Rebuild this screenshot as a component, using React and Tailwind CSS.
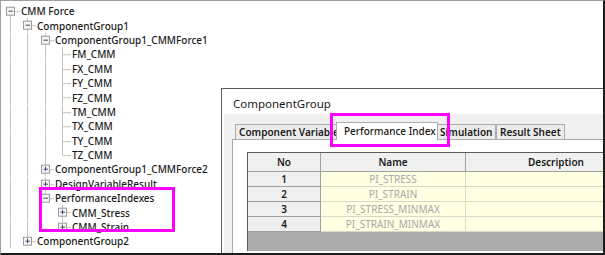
import React from "react";

const ROW_H = 14.4;
const CX = [9, 26, 44, 61];
const TX = [20, 36, 54, 71];

const nodes = [
  { t: "CMM Force", l: 0, box: "-" },
  { t: "ComponentGroup1", l: 1, box: "-" },
  { t: "ComponentGroup1_CMMForce1", l: 2, box: "-" },
  { t: "FM_CMM", l: 3 },
  { t: "FX_CMM", l: 3 },
  { t: "FY_CMM", l: 3 },
  { t: "FZ_CMM", l: 3 },
  { t: "TM_CMM", l: 3 },
  { t: "TX_CMM", l: 3 },
  { t: "TY_CMM", l: 3 },
  { t: "TZ_CMM", l: 3 },
  { t: "ComponentGroup1_CMMForce2", l: 2, box: "+" },
  { t: "DesignVariableResult", l: 2, box: "+" },
  { t: "PerformanceIndexes", l: 2, box: "-" },
  { t: "CMM_Stress", l: 3, box: "+" },
  { t: "CMM_Strain", l: 3, box: "+" },
  { t: "ComponentGroup2", l: 1, box: "+" },
];

// does the node at index i have a later sibling?
function hasNext(i) {
  if (nodes[i].l === 0) return true;
  for (let j = i + 1; j < nodes.length; j++) {
    if (nodes[j].l < nodes[i].l) return false;
    if (nodes[j].l === nodes[i].l) return true;
  }
  return false;
}

function ancestorHasNext(i, level) {
  for (let j = i - 1; j >= 0; j--) {
    if (nodes[j].l === level) return hasNext(j);
  }
  return true;
}

const LINE = "#c3c3c3";

function TreeRow({ node, i }) {
  const { l, box, t } = node;
  const cx = CX[l] + 0.5;
  const mid = ROW_H / 2;
  const w = TX[l];
  return (
    <div className="flex items-center" style={{ height: ROW_H }}>
      <svg width={w} height={ROW_H} className="shrink-0 block">
        {CX.slice(0, l).map((x, k) =>
          ancestorHasNext(i, k) ? (
            <line key={k} x1={x + 0.5} y1={0} x2={x + 0.5} y2={ROW_H} stroke={LINE} strokeWidth="1" />
          ) : null
        )}
        {l > 0 && <line x1={cx} y1={0} x2={cx} y2={mid} stroke={LINE} strokeWidth="1" />}
        {hasNext(i) && <line x1={cx} y1={mid} x2={cx} y2={ROW_H} stroke={LINE} strokeWidth="1" />}
        <line x1={box ? cx + 4 : cx} y1={mid + 0.5} x2={w - 1} y2={mid + 0.5} stroke={LINE} strokeWidth="1" />
        {box && (
          <g>
            <rect x={cx - 4} y={mid - 4} width="8" height="8" fill="#f4f4f4" stroke="#9a9a9a" strokeWidth="1" />
            <line x1={cx - 2} y1={mid} x2={cx + 2.5} y2={mid} stroke="#3f4f6f" strokeWidth="1" />
            {box === "+" && <line x1={cx} y1={mid - 2.5} x2={cx} y2={mid + 2} stroke="#3f4f6f" strokeWidth="1" />}
          </g>
        )}
      </svg>
      <span className="whitespace-nowrap text-[10px] font-medium leading-none text-[#1a1a1a]">{t}</span>
    </div>
  );
}

const rows = [
  ["1", "PI_STRESS"],
  ["2", "PI_STRAIN"],
  ["3", "PI_STRESS_MINMAX"],
  ["4", "PI_STRAIN_MINMAX"],
];

function Tab({ label, width, active }) {
  return active ? (
    <div
      className="relative z-10 -mx-[2px] h-[18px] -mb-px border border-b-0 border-[#acacac] bg-white pl-[7px] pt-[1px] text-[10px] font-medium leading-[14px] text-[#1a1a1a] whitespace-nowrap"
      style={{ width }}
    >
      {label}
    </div>
  ) : (
    <div
      className="h-[15px] overflow-hidden border border-b-0 border-[#acacac] bg-[#ececec] pl-[3px] pt-[1px] text-[10px] font-semibold leading-[13px] text-[#1a1a1a] whitespace-nowrap"
      style={{ width }}
    >
      {label}
    </div>
  );
}

export default function App() {
  return (
    <div
      className="relative w-[605px] h-[255px] overflow-hidden bg-white border-t border-l border-[#a0a0a0] border-r-2 border-r-[#1c1c1c] border-b-2 border-b-[#1c1c1c]"
      style={{ fontFamily: '"Noto Sans", "Open Sans", sans-serif' }}
    >
      <div className="pt-[3px]">
        {nodes.map((n, i) => (
          <TreeRow key={i} node={n} i={i} />
        ))}
      </div>

      {/* dialog window */}
      <div className="absolute left-[220px] top-[87px] w-[400px] h-[190px] border border-[#5c5c5c] bg-white flex flex-col">
        <div className="h-[25px] pl-[11px] pt-[7px] text-[11.5px] leading-[16px] text-[#1a1a1a]">ComponentGroup</div>
        <div className="flex-1 ml-[2px] bg-[#f0f0f0] pl-[8px] pt-[9px]">
          <div className="flex items-end pl-[3px] h-[16px]">
            <Tab label="Component Variable" width={103} />
            <Tab label="Performance Index" width={102} active />
            <Tab label="Simulation" width={60} />
            <Tab label="Result Sheet" width={69} />
          </div>
          <div className="h-[130px] border border-[#acacac] bg-white pl-[14px] pt-[12px]">
            <div className="border-l border-t border-[#5c5c5c] bg-[#ababab] h-[99px] text-[10px]">
              <div className="flex h-[19px] bg-[#f0f0f0] font-semibold text-[#1a1a1a]">
                <div className="w-[73px] flex items-center justify-center border-r border-b border-[#a0a0a0]">No</div>
                <div className="w-[145px] flex items-center justify-center border-r border-b border-[#a0a0a0]">Name</div>
                <div className="flex-1 flex items-center border-b border-[#a0a0a0] pl-[62px]">Description</div>
              </div>
              {rows.map(([no, name]) => (
                <div key={no} className="flex h-[15px]">
                  <div className="w-[73px] flex items-center justify-center border-r border-b border-[#a0a0a0] bg-[#f0f0f0] font-semibold text-[#1a1a1a]">{no}</div>
                  <div className="w-[145px] flex items-center justify-center border-r border-b border-[#d8d8c8] bg-[#ffffe1] text-[#a8a8a8]">{name}</div>
                  <div className="flex-1 border-b border-[#d8d8c8] bg-[#ffffe1]" />
                </div>
              ))}
            </div>
          </div>
        </div>
      </div>

      {/* highlight boxes */}
      <div className="absolute left-[38px] top-[186px] w-[136px] h-[45px] border-[3px] border-[#ff00ff]" />
      <div className="absolute left-[329px] top-[112px] w-[120px] h-[34px] border-[3px] border-[#ff00ff] z-20" />
    </div>
  );
}
